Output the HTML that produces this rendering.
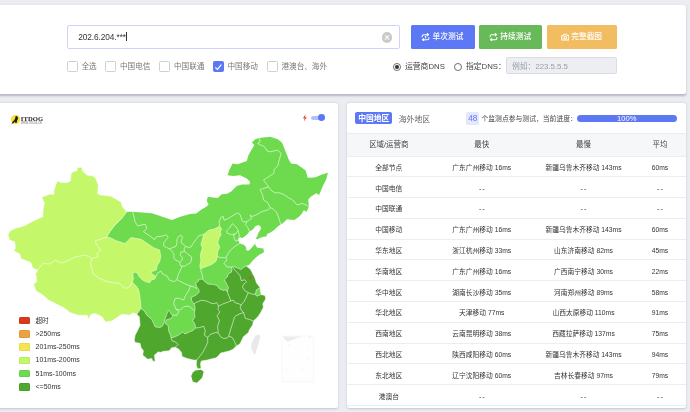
<!DOCTYPE html>
<html lang="zh-CN">
<head>
<meta charset="utf-8">
<title>ITDOG Ping</title>
<style>
*{box-sizing:border-box;margin:0;padding:0}
html,body{width:690px;height:412px;overflow:hidden;background:#ebedf2;font-family:"Liberation Sans","Noto Sans CJK SC",sans-serif;color:#444;}
.abs{position:absolute}
.card{position:absolute;background:#fff;border-radius:2.5px;box-shadow:0 .3px 2.2px rgba(110,118,135,.32);}
#top{left:-10px;top:5px;width:696.2px;height:88.9px;box-shadow:0 1.5px 2.2px rgba(100,106,122,.4);}
#mapcard{left:-10px;top:103px;width:348px;height:305px;}
#tblcard{left:346.8px;top:103px;width:339px;height:305px;overflow:hidden}
.input{position:absolute;left:67px;top:25px;width:332.6px;height:23.5px;border:1px solid #cdd4fc;border-radius:2px;background:#fff}
.input span{position:absolute;left:10.3px;top:6px;font-size:8.3px;line-height:10px;color:#333;letter-spacing:-0.1px}
.caret{position:absolute;left:58.2px;top:6.2px;width:.8px;height:9.3px;background:#333}
.clear{position:absolute;left:381.5px;top:32px;width:10.5px;height:10.5px;border-radius:50%;background:#c9c9c9}
.clear:before,.clear:after{content:"";position:absolute;left:2.25px;top:4.7px;width:6px;height:1.1px;background:#fff;transform:rotate(45deg)}
.clear:after{transform:rotate(-45deg)}
.cb{position:absolute;top:61.2px;width:11px;height:11px;border:1px solid #cdd0d7;border-radius:1.5px;background:#fff}
.cb.on{background:#5c78f5;border-color:#5c78f5}
.cbl{position:absolute;top:62.4px;font-size:7.6px;line-height:10px;color:#777;margin-left:.5px;white-space:nowrap}
.btn{position:absolute;top:25px;height:23.5px;border-radius:1.5px;color:#fff;font-size:7.7px;line-height:10px;white-space:nowrap;display:flex;align-items:center;justify-content:center;padding-top:.9px;padding-right:1.2px}
.btn svg{margin-right:2.1px;margin-top:-.6px;flex:none}
.btn b{font-weight:500}
.radio{position:absolute;top:62.8px;width:7.8px;height:7.8px;border:.9px solid #6a6a6a;border-radius:50%;background:#fff}
.radio.on:after{content:"";position:absolute;left:1.1px;top:1.1px;width:3.8px;height:3.8px;border-radius:50%;background:#333}
.rl{position:absolute;top:61.6px;font-size:7.8px;line-height:10px;color:#444;white-space:nowrap}
.dns{position:absolute;left:506px;top:57.4px;width:110.5px;height:17px;background:#eceef2;border:1px solid #d9dce2;border-radius:1.5px}
.dns span{position:absolute;left:5px;top:3.2px;font-size:7.8px;line-height:9px;color:#9a9da3;white-space:nowrap}
.lgb{position:absolute;left:18.7px;width:11.1px;height:7.6px;border-radius:1.5px;box-shadow:inset 0 0 0 .5px rgba(0,0,0,.1)}
.lgt{position:absolute;left:35.5px;font-size:7px;line-height:10px;color:#333;white-space:nowrap}
/* table */
.tab-on{position:absolute;left:8.5px;top:9.1px;width:37px;height:12.2px;padding-top:1.3px;background:#5c78f5;border-radius:2px;color:#fff;font-size:7.8px;line-height:11px;text-align:center;font-weight:bold;white-space:nowrap}
.tab-off{position:absolute;left:52px;top:11.5px;font-size:7.8px;line-height:10px;color:#666;white-space:nowrap}
.badge{position:absolute;left:119.3px;top:9.2px;width:13.2px;height:12.8px;padding-top:.9px;background:#e3e8fd;border-radius:1.5px;color:#5c78f5;font-size:8.2px;line-height:12px;text-align:center}
.ptxt{position:absolute;left:134.7px;top:10.7px;font-size:6.82px;line-height:10px;color:#444;white-space:nowrap}
.prog{position:absolute;left:230px;top:11.8px;width:100px;height:7px;border-radius:3.5px;background:#5c78f5;color:#fff;font-size:7.6px;line-height:7.4px;text-align:center}
.thead{position:absolute;left:0;top:30.2px;width:339px;height:23.4px;background:#f6f7f9;border-top:1px solid #e9edf4;border-bottom:1px solid #e9edf4}
.row{position:absolute;left:0;width:339px;height:20.85px;border-bottom:1px solid #e9edf4}
.row .c{padding-top:1.4px}
.dash{letter-spacing:.9px;margin-right:-.9px;font-size:7.4px}
.c{position:absolute;top:0;height:100%;font-size:6.75px;color:#333;text-align:center;white-space:nowrap;display:block;line-height:20.4px}
.thead .c{font-size:7.45px;color:#444;line-height:22.8px}
.c1{left:-8px;width:100px}.c2{left:75px;width:120px}.c3{left:176.7px;width:120px}.c4{left:283.2px;width:60px}
</style>
</head>
<body>
<div id="root" style="position:absolute;left:0;top:0;width:690px;height:412px;will-change:transform;transform:translateZ(0)">
<div class="card" id="top">
 <div class="abs" style="left:10px;top:-5px">
  <div class="input"><span>202.6.204.***</span><i class="caret"></i></div>
  <i class="clear"></i>
  <i class="cb" style="left:67px"></i><span class="cbl" style="left:81px">全选</span>
  <i class="cb" style="left:105px"></i><span class="cbl" style="left:119.5px">中国电信</span>
  <i class="cb" style="left:159.2px"></i><span class="cbl" style="left:173.5px">中国联通</span>
  <i class="cb on" style="left:213px"><svg class="abs" style="left:.3px;top:.4px" width="8.500" height="8.500" viewBox="0 0 8 8"><path d="M1.2 4.1 L3.2 6.1 L6.9 1.6" fill="none" stroke="#fff" stroke-width="1.1"/></svg></i><span class="cbl" style="left:227px">中国移动</span>
  <i class="cb" style="left:266.5px"></i><span class="cbl" style="left:281px">港澳台、海外</span>
  <div class="btn" style="left:411px;width:64px;background:#5c78f5"><svg width="9" height="8.400" viewBox="0 0 16 15" fill="none" stroke="#fff" stroke-width="1.9"><path d="M2 7.500V5.800a2.800 2.800 0 0 1 2.800-2.800H13.500M10.500 .5l3 2.500-3 2.500M14 7.500v1.700a2.800 2.800 0 0 1-2.800 2.800H2.500M5.500 9.500l-3 2.500 3 2.500M8.300 5.800v3.800M8.300 5.800l-1.300.8" stroke-linejoin="round"/></svg><b>单次测试</b></div>
  <div class="btn" style="left:479.3px;width:63px;background:#68b95a"><svg width="9" height="8.400" viewBox="0 0 16 15" fill="none" stroke="#fff" stroke-width="1.9"><path d="M2 7.500V5.800a2.800 2.800 0 0 1 2.800-2.800H13.500M10.500 .5l3 2.500-3 2.500M14 7.500v1.700a2.800 2.800 0 0 1-2.800 2.800H2.500M5.500 9.500l-3 2.500 3 2.500" stroke-linejoin="round"/></svg><b>持续测试</b></div>
  <div class="btn" style="left:546.9px;width:70.1px;background:#f2bd60"><svg width="8.600" height="8" viewBox="0 0 16 15" fill="none" stroke="#fff" stroke-width="1.9" stroke-linejoin="round"><path d="M1.500 4.500h3l1.200-2h4.600l1.200 2h3v8.500h-13z"/><circle cx="8" cy="8.500" r="2.500"/></svg><b>完整截图</b></div>
  <i class="radio on" style="left:392.8px"></i><span class="rl" style="left:405px">运营商DNS</span>
  <i class="radio" style="left:454px"></i><span class="rl" style="left:466px">指定DNS：</span>
  <div class="dns"><span>例如：223.5.5.5</span></div>
 </div>
</div>

<div class="card" id="mapcard">
 <div class="abs" style="left:10px;top:-103px;width:338px;height:412px" id="mapwrap">
  <svg class="abs" style="left:0;top:0" width="338" height="412" viewBox="0 0 338 412">
<g stroke="#fff" stroke-width="0.5" stroke-linejoin="round">
<polygon fill="#6edb4f" stroke="none" points="106.5,237.2 110.0,231.5 115.0,225.1 121.7,218.4 126.7,211.7 132.6,211.7 151.8,213.3 160.2,215.9 171.9,220.0 180.3,216.7 190.0,214.1 196.2,213.5 201.1,209.8 206.1,206.7 208.6,204.8 206.7,200.5 207.9,196.8 212.9,197.4 217.8,198.0 221.6,194.3 227.1,193.7 231.5,191.2 236.7,186.1 241.8,184.4 249.3,184.4 250.1,181.9 246.8,178.5 240.1,175.2 233.4,176.0 227.5,175.2 229.2,170.2 232.6,163.5 237.6,164.3 246.8,161.0 248.5,155.1 251.8,149.2 254.3,145.1 251.8,142.6 255.2,139.2 259.3,138.0 270.2,136.7 277.7,139.2 281.9,142.6 284.4,148.4 287.0,155.1 288.6,159.3 291.1,163.5 297.0,164.3 302.0,167.7 305.4,170.2 306.3,172.5 307.5,177.5 311.0,177.8 315.5,177.2 322.0,174.6 327.9,172.8 326.4,179.0 322.8,186.2 319.1,195.0 316.2,193.2 311.1,196.4 308.2,199.4 308.9,206.6 306.7,211.7 303.8,210.3 301.6,213.9 298.7,216.9 294.4,220.0 287.0,219.3 282.8,223.3 280.9,224.2 277.4,226.8 273.9,230.3 270.4,232.5 266.9,234.2 266.5,236.4 263.4,236.8 259.9,237.9 256.9,239.6 256.0,238.1 257.3,236.0 258.6,232.5 260.8,229.0 260.8,226.4 258.2,225.0 255.1,226.4 252.9,229.4 249.5,231.6 246.8,234.7 242.5,238.1 239.8,237.3 238.1,240.3 239.8,243.4 243.8,244.7 246.0,246.9 246.4,250.6 249.0,250.6 251.2,248.2 254.3,244.7 255.1,242.9 255.6,245.6 257.3,247.8 263.4,248.6 264.0,252.3 259.3,254.8 255.6,257.8 251.9,261.6 249.4,264.7 246.3,265.9 244.0,275.0 235.0,300.0 215.0,320.0 205.0,340.0 185.0,345.0 160.0,335.0 150.0,330.0 130.0,300.0 128.0,265.0"/>
<polygon fill="#c5f76b" points="41.8,197.2 50.2,194.0 53.9,194.5 53.9,190.2 57.2,181.0 60.3,182.2 67.0,182.7 70.3,181.0 71.1,173.5 73.7,171.4 77.0,170.9 77.3,167.6 82.0,167.3 82.5,170.9 87.0,175.1 92.9,176.0 95.7,178.5 98.4,185.2 97.6,193.5 100.4,194.9 110.5,196.1 116.7,199.4 120.9,201.9 122.6,206.9 126.7,211.7 121.7,218.4 115.0,225.1 110.0,231.5 106.5,237.2 110.0,237.6 116.7,241.0 125.1,243.5 130.9,237.6 141.0,239.3 146.0,242.6 153.5,247.7 159.6,250.0 160.8,256.2 159.6,261.8 157.1,265.5 156.5,269.8 153.4,271.0 150.9,271.7 152.2,274.1 155.9,276.6 154.7,279.1 151.6,279.7 149.7,282.8 145.4,281.6 142.3,279.7 139.2,276.6 137.3,272.9 134.9,272.0 132.7,274.1 133.4,278.5 132.4,282.2 136.1,285.9 138.6,289.6 139.8,295.8 140.4,301.0 141.0,308.5 136.8,314.3 132.6,312.7 130.1,315.2 121.7,314.3 116.7,317.7 112.0,321.0 105.5,321.9 102.1,316.8 95.4,313.5 91.2,314.3 88.7,318.9 87.0,315.2 78.7,315.2 70.3,312.7 63.6,307.6 56.9,304.3 48.5,300.1 41.8,294.2 36.0,290.9 33.5,284.2 36.8,281.7 36.0,275.0 35.2,274.4 37.7,270.3 32.6,267.7 31.0,262.7 20.9,258.5 20.1,254.4 13.7,250.5 15.4,248.5 14.7,241.8 9.7,240.1 8.0,235.1 10.0,230.9 15.9,228.1 18.7,227.6 25.1,225.4 31.8,221.7 42.7,216.7 43.2,210.0 44.4,202.7"/>
<polygon fill="#4fa72e" points="246.3,265.9 250.6,269.6 253.1,274.6 254.6,277.0 256.4,282.8 259.9,287.5 261.0,294.5 265.1,295.6 265.7,299.1 262.8,303.8 263.4,307.3 261.0,311.9 258.1,316.6 256.0,318.6 253.5,321.1 252.6,325.0 249.3,330.0 248.5,332.5 243.4,336.7 240.0,343.8 236.3,346.1 233.4,349.0 229.9,350.8 225.2,351.9 220.6,353.1 218.2,356.0 215.9,358.0 213.8,358.3 207.1,360.1 201.4,360.9 200.5,363.4 201.0,368.6 197.6,368.8 196.3,365.1 196.6,360.1 193.7,360.1 187.0,358.4 182.1,356.6 181.5,352.5 178.6,349.0 175.1,347.3 171.6,347.8 169.3,350.8 163.5,351.3 160.0,352.5 158.5,351.7 154.4,355.1 155.2,361.4 152.7,360.9 151.8,358.4 147.7,359.2 142.6,355.1 143.5,350.9 141.0,347.5 140.1,343.3 135.1,342.5 134.3,340.0 135.1,335.3 136.8,331.9 140.1,325.2 139.3,316.8 136.8,314.3 141.0,308.5 144.3,311.0 146.8,315.2 151.8,319.4 155.2,326.9 160.0,327.5 162.3,326.3 164.1,322.8 165.2,318.7 167.0,313.5 168.7,310.3 169.9,311.2 171.1,314.1 172.8,315.2 171.6,318.2 166.4,319.9 165.2,323.4 168.2,325.7 168.7,331.0 170.5,335.0 171.1,337.9 175.1,336.8 178.6,335.0 182.7,332.1 185.0,333.9 189.1,332.1 193.2,330.4 195.5,328.0 194.9,324.0 192.6,320.5 194.9,317.0 194.4,312.3 194.7,310.8 195.2,307.3 194.1,303.8 191.7,300.9 191.2,297.4 196.4,295.0 199.3,292.1 198.7,289.2 196.4,286.3 195.8,282.8 198.7,281.1 198.2,279.3 202.8,279.3 204.6,281.6 208.0,284.0 213.9,284.6 217.4,285.7 219.1,288.6 223.2,290.4 226.1,289.8 227.3,292.1 228.4,287.5 226.1,282.8 224.4,279.9 227.3,277.0 228.4,273.5 231.3,272.3 232.1,269.6 231.5,267.1 233.9,266.5 238.3,268.4 240.7,269.6 243.2,267.7"/>
<polygon fill="#c5f76b" points="203.9,234.2 209.0,230.1 214.1,229.1 219.7,226.3 221.7,229.1 220.2,232.1 221.2,234.7 219.2,237.7 217.7,242.3 219.7,247.4 217.7,251.5 217.2,256.6 216.1,261.2 212.1,264.2 207.0,266.3 200.5,268.8 199.8,265.8 200.9,260.2 200.3,254.5 202.4,247.9 200.9,244.4 202.4,239.3"/>
<polygon fill="#4fa72e" stroke="none" points="195.4,370.5 201.2,369.8 203.7,371.8 202.1,377.7 197.0,382.7 192.9,381.8 191.2,376.0 192.9,372.6"/>
<polygon fill="#6edb4f" points="256.4,289.8 259.9,287.8 261.0,294.5 257.0,296.2 255.2,294.5"/>
<polygon fill="#e9e9e9" stroke="none" points="258.5,334.2 260.2,335.9 259.3,341.7 256.8,349.3 254.8,355.1 252.6,351.8 251.0,346.8 252.6,340.9 255.2,335.9"/>
</g>
<g fill="none" stroke="#fff" stroke-width="0.62" stroke-opacity="0.92" stroke-linejoin="round">
<polyline points="37.7,270.0 42.7,263.6 50.2,263.9 55.2,260.2 61.9,263.2 68.6,260.2 74.5,257.2 83.7,255.2 88.7,256.0 91.7,258.5"/>
<polyline points="91.7,258.5 97.9,256.9 97.1,253.5 100.4,250.2 96.3,243.5 95.1,241.0 106.5,237.2"/>
<polyline points="91.7,258.5 90.4,263.6 92.1,268.6 92.9,273.6 98.8,278.0 107.1,281.7 115.0,283.0 120.0,283.4 123.1,287.1 126.2,288.4 129.9,286.5 132.4,282.2"/>
<polyline points="132.6,211.7 135.1,221.7 137.6,225.9 145.2,224.2 146.8,228.4 143.5,231.8 151.0,236.8 154.5,239.6 155.0,238.2 157.0,236.7 162.1,236.2 166.2,234.7 168.2,237.2 165.7,240.3 163.7,242.8 163.7,245.9 169.3,248.9"/>
<polyline points="169.3,248.9 172.3,251.5 173.9,254.5 173.9,258.6 176.9,260.7 180.0,262.2 182.0,260.2 182.5,257.6 180.0,255.1 181.0,252.0 184.5,251.5 184.0,248.9 185.6,246.4 184.0,244.9 181.0,242.8 181.5,240.3 182.5,237.2 181.0,235.2 178.9,236.2 176.9,239.3 176.9,243.3 175.9,246.4 169.3,248.9"/>
<polyline points="184.5,251.5 187.6,254.0 191.7,257.1 191.2,261.2 189.6,263.7 187.6,264.2 185.6,265.8 182.0,266.3 180.0,265.2 180.0,262.2"/>
<polyline points="182.0,266.3 180.0,271.0 178.2,274.8 176.9,279.7"/>
<polyline points="185.6,246.4 188.1,247.4 191.2,246.9 192.7,243.9 195.8,239.8 198.8,235.7 202.9,234.7 203.9,234.2"/>
<polyline points="200.5,268.8 201.8,273.3 203.0,278.9"/>
<polyline points="155.9,276.6 157.1,273.5 160.8,271.0 162.7,274.1 167.0,276.0 169.5,280.3 174.5,281.6 176.9,279.7"/>
<polyline points="176.9,279.7 181.9,282.2 186.8,284.7 190.5,285.9 194.3,287.1 197.0,288.5"/>
<polyline points="190.5,285.9 188.7,290.8 185.0,296.4 183.7,300.1 179.4,298.3 175.3,298.4 173.6,303.5 176.1,309.3"/>
<polyline points="176.1,309.3 180.3,310.2 183.7,306.8 188.7,306.0 192.0,308.5 194.7,310.8"/>
<polyline points="176.1,309.3 178.6,311.8 177.0,315.2 172.8,315.2"/>
<polyline points="219.7,226.3 219.1,222.1 220.9,217.2 223.4,216.6 224.0,220.3 228.4,218.4 233.3,215.3 237.6,212.8 240.1,214.7 241.2,217.6 242.0,220.7 243.8,222.0 246.8,221.6 251.6,218.5 250.3,215.0 252.0,216.5 255.6,215.3 261.8,211.6 268.0,209.8 270.2,207.6"/>
<polyline points="246.8,221.6 245.5,224.6 248.1,228.1 249.5,231.6"/>
<polyline points="270.2,207.6 267.7,202.5 263.5,200.0 262.7,195.0 261.8,193.6 260.2,189.4 268.5,186.9"/>
<polyline points="259.3,138.0 260.2,141.7 257.7,143.4 261.0,145.1 264.4,146.7 266.9,150.9 270.2,151.8 277.7,150.1 281.1,153.4 279.4,159.3 277.7,166.0 274.4,169.3 273.6,173.5 268.5,176.9 263.5,180.2 266.9,184.4 268.5,186.9"/>
<polyline points="268.5,186.9 271.9,191.1 275.2,192.8 279.4,192.8 283.6,194.4 288.6,197.8 292.8,200.0 297.0,205.0 302.0,203.4 306.2,205.0 308.9,206.6"/>
<polyline points="270.2,207.6 273.6,209.2 276.1,211.7 278.6,216.8 279.1,219.4 280.9,224.2"/>
<polyline points="232.4,223.7 236.4,227.2 238.1,230.7 235.5,233.8 231.6,234.7 227.2,233.3 226.7,230.7 229.4,228.1 232.4,223.7"/>
<polyline points="238.1,230.7 239.4,235.5 239.0,237.7 238.1,240.3 235.9,241.2 234.2,238.6 233.7,234.7 235.5,233.8"/>
<polyline points="239.8,243.4 238.1,244.3 233.7,247.3 230.8,249.8 227.7,254.1 225.9,257.8 227.1,259.7"/>
<polyline points="217.2,256.6 221.2,257.6 225.9,257.8"/>
<polyline points="227.1,259.7 224.0,263.4 227.1,267.1 231.5,267.1"/>
<polyline points="171.1,337.9 172.2,340.9 175.7,342.0 178.0,344.4 175.1,347.3"/>
<polyline points="196.6,360.1 199.0,357.2 203.1,351.9 205.4,347.3 207.7,342.6 207.7,337.4"/>
<polyline points="195.5,328.0 199.6,327.5 203.7,326.3 205.4,331.0 204.2,335.0 207.7,337.4 210.1,334.5 214.7,332.7 218.2,332.7"/>
<polyline points="218.2,332.7 220.6,336.8 223.5,338.5 227.5,337.9 228.7,336.2"/>
<polyline points="228.7,336.2 232.2,337.4 234.5,341.4 236.3,346.1"/>
<polyline points="228.7,336.2 230.5,329.8 232.8,322.8 234.5,317.0 236.6,315.4 240.1,313.7 243.6,312.5"/>
<polyline points="244.7,316.6 245.5,318.5 249.3,319.4 253.5,321.1"/>
<polyline points="244.7,316.6 243.6,312.5 241.8,310.8 240.1,307.8 241.2,304.9"/>
<polyline points="241.2,304.9 244.1,301.4 245.9,297.9 248.2,292.7"/>
<polyline points="248.2,292.7 251.7,293.9 255.2,294.5"/>
<polyline points="232.6,266.7 234.8,270.0 237.7,272.9 240.1,275.8 241.2,280.5 244.7,279.9 246.5,281.6 244.1,284.0 242.4,286.9 244.7,290.4 248.2,292.7"/>
<polyline points="227.3,292.1 229.0,296.2 230.8,300.9 233.7,300.3 234.8,302.6 238.9,303.8 241.2,304.9"/>
<polyline points="230.8,300.9 228.4,302.0 223.2,303.8 218.5,306.1"/>
<polyline points="194.1,303.8 195.8,302.6 201.1,300.3 206.3,300.9 211.0,303.2 213.9,303.8 216.8,302.6 218.5,306.1"/>
<polyline points="218.5,306.1 217.9,309.6 220.0,311.7 217.1,315.8 219.4,320.5 217.6,326.3 218.2,332.7"/>
</g>
<rect x="282" y="336" width="31.3" height="45.8" fill="#fefefe" stroke="#f3f3f3" stroke-width="0.6"/>
<polygon fill="#ececec" points="282.8,336.6 302,336.4 296,338.5 288,341.8 285,339.5"/>
<polygon fill="#ececec" points="308,336.5 311,336.5 310,338.5"/>
<g stroke="#eeeeee" stroke-width="0.7"><path d="M289.5,344l-1.2,1.8M308,346l-.6,2M308,358l-1,2M290,359l-1,1.500M303,368l-1,1.800M286,368v1.500M295,375l1,.5"/></g>
<path d="M250.900,275.500l-2.300,2.600h1.500l-1.100,2.200 2.600-2.900h-1.500l1.100-1.900z" fill="#e8381c"/>
</svg>
  <i class="lgb" style="top:316.90px;background:#d93a1f"></i><span class="lgt" style="top:315.70px;font-size:6.6px">超时</span>
  <i class="lgb" style="top:330.15px;background:#eaa243"></i><span class="lgt" style="top:328.95px">&gt;250ms</span>
  <i class="lgb" style="top:343.40px;background:#f5e650"></i><span class="lgt" style="top:342.20px">201ms-250ms</span>
  <i class="lgb" style="top:356.65px;background:#c5f76b"></i><span class="lgt" style="top:355.45px">101ms-200ms</span>
  <i class="lgb" style="top:369.90px;background:#6edb4f"></i><span class="lgt" style="top:368.70px">51ms-100ms</span>
  <i class="lgb" style="top:383.15px;background:#4fa72e"></i><span class="lgt" style="top:381.95px">&lt;=50ms</span>
  <div class="abs" style="left:11.1px;top:115.4px;width:8.9px;height:8.9px;border-radius:50%;background:#fadf2c"></div>
  <svg class="abs" style="left:10px;top:114px" width="12" height="12" viewBox="10 114 12 12"><path d="M16.200 116 L17.500 116.400 L18.100 118.600 L17.200 120.200 L16.500 123.100 L15.600 123.100 L14.900 121.500 L13.700 123.100 L12.400 123.400 L11.400 124.400 L12.700 121.500 L14.300 120.200 L15.200 118.300 L15.500 116.600 Z" fill="#1a1a1a"/></svg>
  <div class="abs" style="left:20.8px;top:115.6px;font-family:'Liberation Serif',serif;font-weight:bold;font-size:6.6px;line-height:6px;color:#222;letter-spacing:.1px">ITDOG</div>
  <div class="abs" style="left:20.9px;top:123.2px;font-size:2.6px;line-height:2.8px;color:#666;letter-spacing:.02px;white-space:nowrap">WWW.ITDOG.CN</div>
  <svg class="abs" style="left:302.3px;top:114.3px" width="5.8" height="8.1" viewBox="0 0 5 7"><path d="M3.1 0.300 L0.800 3.600 H2.300 L1.500 6.500 L4.200 2.800 H2.600 Z" fill="#e8442c"/></svg>
  <div class="abs" style="left:311px;top:115.5px;width:13.5px;height:4.2px;border-radius:2.1px;background:#b3bff8"></div>
  <div class="abs" style="left:317.8px;top:114.2px;width:6.8px;height:6.8px;border-radius:50%;background:#5c78f5"></div>

 </div>
</div>

<div class="card" id="tblcard">
 <div class="tab-on">中国地区</div><div class="tab-off">海外地区</div>
 <div class="badge">48</div><div class="ptxt">个监测点参与测试，当前进度：</div>
 <div class="prog">100%</div>
 <div class="thead"><div class="c c1">区域/运营商</div><div class="c c2">最快</div><div class="c c3">最慢</div><div class="c c4">平均</div></div>
  <div class="row" style="top:53.40px"><div class="c c1">全部节点</div><div class="c c2">广东广州移动 16ms</div><div class="c c3">新疆乌鲁木齐移动 143ms</div><div class="c c4">60ms</div></div>
 <div class="row" style="top:74.20px"><div class="c c1">中国电信</div><div class="c c2"><span class="dash">--</span></div><div class="c c3"><span class="dash">--</span></div><div class="c c4"><span class="dash">--</span></div></div>
 <div class="row" style="top:95.00px"><div class="c c1">中国联通</div><div class="c c2"><span class="dash">--</span></div><div class="c c3"><span class="dash">--</span></div><div class="c c4"><span class="dash">--</span></div></div>
 <div class="row" style="top:115.80px"><div class="c c1">中国移动</div><div class="c c2">广东广州移动 16ms</div><div class="c c3">新疆乌鲁木齐移动 143ms</div><div class="c c4">60ms</div></div>
 <div class="row" style="top:136.60px"><div class="c c1">华东地区</div><div class="c c2">浙江杭州移动 33ms</div><div class="c c3">山东济南移动 82ms</div><div class="c c4">45ms</div></div>
 <div class="row" style="top:157.40px"><div class="c c1">华南地区</div><div class="c c2">广东广州移动 16ms</div><div class="c c3">广西南宁移动 30ms</div><div class="c c4">22ms</div></div>
 <div class="row" style="top:178.20px"><div class="c c1">华中地区</div><div class="c c2">湖南长沙移动 35ms</div><div class="c c3">河南郑州移动 89ms</div><div class="c c4">58ms</div></div>
 <div class="row" style="top:199.00px"><div class="c c1">华北地区</div><div class="c c2">天津移动 77ms</div><div class="c c3">山西太原移动 110ms</div><div class="c c4">91ms</div></div>
 <div class="row" style="top:219.80px"><div class="c c1">西南地区</div><div class="c c2">云南昆明移动 38ms</div><div class="c c3">西藏拉萨移动 137ms</div><div class="c c4">75ms</div></div>
 <div class="row" style="top:240.60px"><div class="c c1">西北地区</div><div class="c c2">陕西咸阳移动 60ms</div><div class="c c3">新疆乌鲁木齐移动 143ms</div><div class="c c4">94ms</div></div>
 <div class="row" style="top:261.40px"><div class="c c1">东北地区</div><div class="c c2">辽宁沈阳移动 60ms</div><div class="c c3">吉林长春移动 97ms</div><div class="c c4">79ms</div></div>
 <div class="row" style="top:282.20px"><div class="c c1">港澳台</div><div class="c c2"><span class="dash">--</span></div><div class="c c3"><span class="dash">--</span></div><div class="c c4"><span class="dash">--</span></div></div>
</div>
</div>
</body>
</html>
